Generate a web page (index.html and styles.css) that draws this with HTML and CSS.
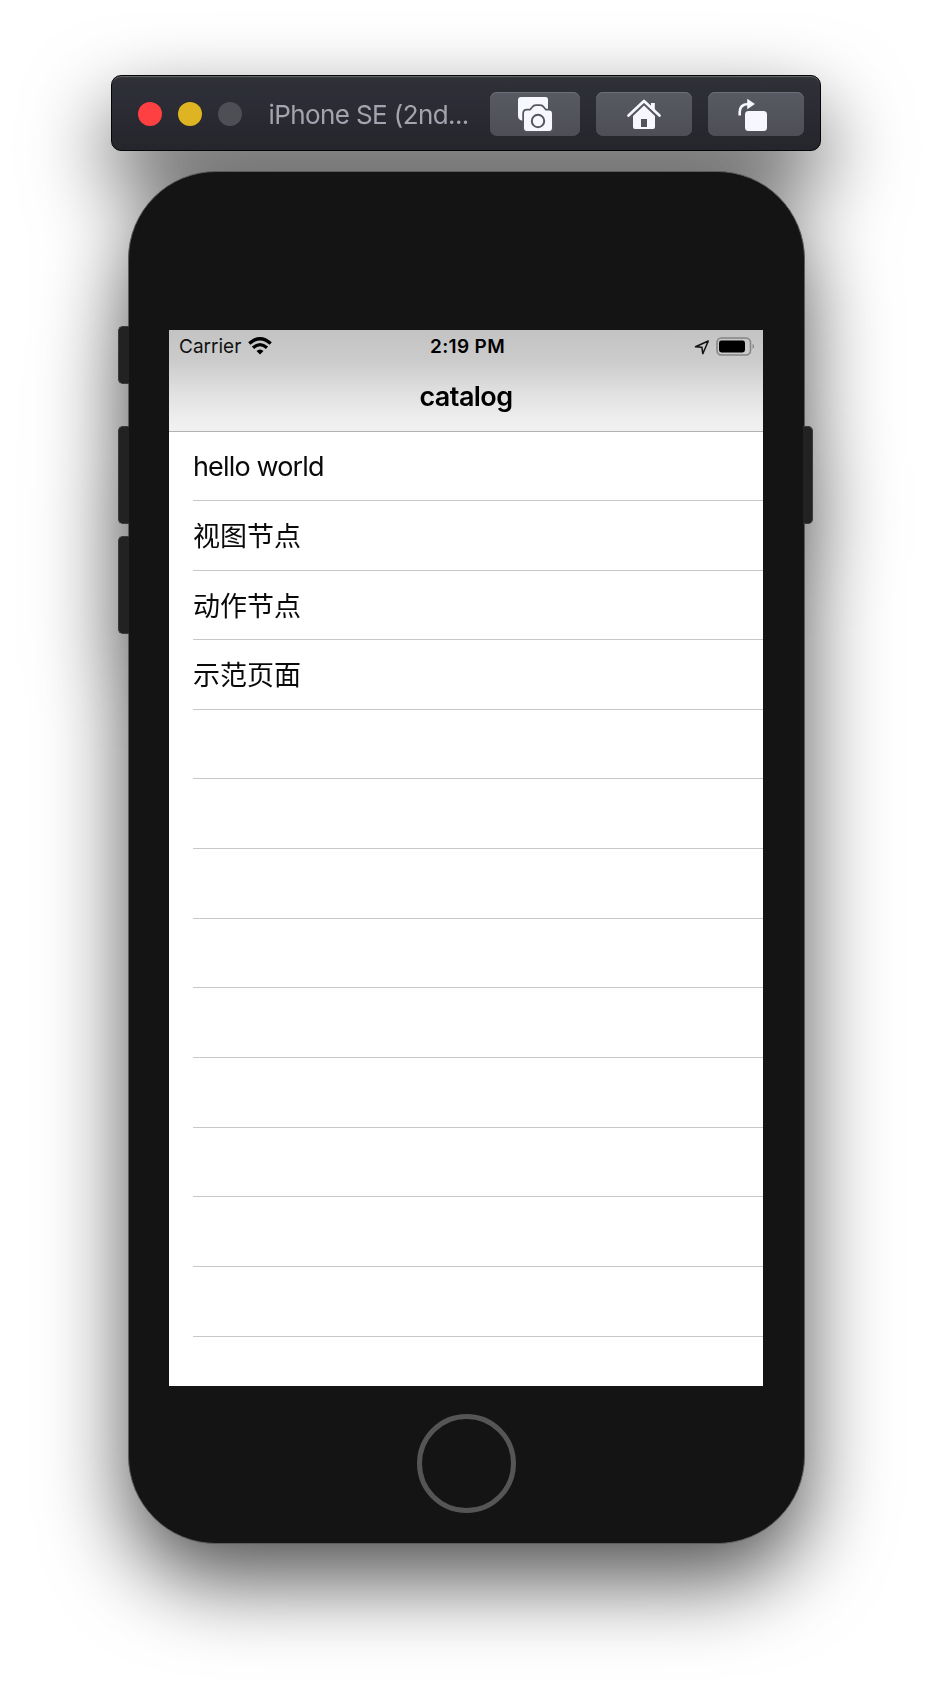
FILE: index.html
```html
<!DOCTYPE html>
<html lang="zh">
<head>
<meta charset="utf-8">
<title>catalog</title>
<link rel="stylesheet" href="styles.css">
</head>
<body>
<main class="simulator">
  <header class="titlebar">
    <div class="lights"><i class="light red"></i><i class="light yellow"></i><i class="light gray"></i></div>
    <div class="title">iPhone SE (2nd...</div>
    <div class="tools">
      <div class="tool camera">
        <svg width="90" height="44" viewBox="490 92 90 44">
          <path d="M521 97h24.500q2.500 0 2.500 2.500v14h-25v7.300q-5-.3-5-5.300v-15.500q0-3 3-3z" fill="#f6f7ff"/>
          <path d="M527 110.500h3.500l2.500-3q1-1.500 3-1.500h4q2 0 3 1.500l2.500 3h3.500q3 0 3 3v14.500q0 3-3 3h-22q-3 0-3-3v-14.500q0-3 3-3z" fill="#f6f7ff" stroke="#55565e" stroke-width="3.500" paint-order="stroke"/>
          <circle cx="538" cy="121" r="6.200" fill="none" stroke="#55565e" stroke-width="2"/>
        </svg>
      </div>
      <div class="tool">
        <svg width="96" height="44" viewBox="596 92 96 44">
          <path d="M628.500 115.500L644 101l15.500 14.500" fill="none" stroke="#f6f7ff" stroke-width="2.700" stroke-linecap="round" stroke-linejoin="round"/>
          <path d="M651 103h3.800v8l-3.800-3.500z" fill="#f6f7ff"/>
          <path d="M644 105.500L655 116v11q0 2-2 2h-18q-2 0-2-2v-11z" fill="#f6f7ff"/>
          <rect x="641" y="119" width="6" height="8" fill="#52535a"/>
        </svg>
      </div>
      <div class="tool">
        <svg width="96" height="44" viewBox="708 92 96 44">
          <rect x="745" y="111" width="22" height="20" rx="3.500" fill="#f6f7ff"/>
          <path d="M739.700 115.500v-3.500q0-7.500 8.300-8" fill="none" stroke="#f6f7ff" stroke-width="2.600"/>
          <path d="M747.500 99.300l7 4.700-7 4.700z" fill="#f6f7ff" stroke="#f6f7ff" stroke-width=".6" stroke-linejoin="round"/>
        </svg>
      </div>
    </div>
  </header>
  <section class="phone">
    <i class="key mute"></i><i class="key up"></i><i class="key down"></i><i class="key power"></i>
    <div class="screen">
      <div class="navbar">
        <div class="status">
          <div class="carrier"><span class="carrier-name">Carrier</span>
            <svg width="24" height="18" viewBox="0 0 24 18">
              <g fill="none" stroke="#000" stroke-width="3.300"><path d="M1.300 6.500q10.700-9.500 21.400 0"/><path d="M5 10.700q7-6.200 14 0"/></g>
              <path d="M8.500 14q3.500-3 7 0L12 17.400z"/>
            </svg>
          </div>
          <span class="time">2:19 PM</span>
          <div class="indicators">
            <svg width="62" height="20" viewBox="694 335 62 20">
              <path d="M695.500 345.700L708.300 340l-5.500 12.700-.900-6.400z" fill="none" stroke="#111" stroke-width="1.500" stroke-linejoin="round"/>
              <rect x="717" y="337" width="33.500" height="17" rx="4.500" fill="none" stroke="#858585" stroke-width="1.600"/>
              <rect x="719" y="339.500" width="26" height="12" rx="2.400"/>
              <path d="M752.600 342.500q2.600 2.800 0 5.600z" fill="#777"/>
            </svg>
          </div>
        </div>
        <h1 class="heading">catalog</h1>
      </div>
      <ul class="list">
        <li class="row latin">hello world</li>
        <li class="row">视图节点</li>
        <li class="row">动作节点</li>
        <li class="row">示范页面</li>
        <li class="row"></li><li class="row"></li><li class="row"></li>
        <li class="row"></li><li class="row"></li><li class="row"></li>
        <li class="row"></li><li class="row"></li><li class="row"></li>
      </ul>
    </div>
    <div class="home"></div>
  </section>
</main>
</body>
</html>
```

FILE: styles.css
```css
* { box-sizing: border-box; }
body {
  margin: 0;
  background: #fff;
  font-family: Inter, "Noto Sans CJK SC", sans-serif;
  overflow: hidden;
}
.simulator {
  width: 932px;
  height: 1694px;
  padding-top: 75px;
  display: flex;
  flex-direction: column;
  align-items: center;
  gap: 20px;
  filter: drop-shadow(0 36px 42px rgba(0, 0, 0, .68));
}
.titlebar {
  width: 710px;
  height: 76px;
  padding: 1px 16px 0 24px;
  display: flex;
  align-items: center;
  justify-content: space-between;
  background: linear-gradient(#303236, #2c2d36 30%, #25262b);
  border: 1px solid #050506;
  border-radius: 10px;
  box-shadow: inset 0 2px 1px -1px #6a6b6e;
}
.lights { display: flex; gap: 16px; padding-left: 2px; }
.light { width: 24px; height: 24px; border-radius: 50%; }
.red { background: #ff4042; }
.yellow { background: #dfb422; }
.gray { background: #4e4f54; }
.title {
  margin-left: 5px;
  padding-top: 2px;
  width: 200px;
  font-size: 26px;
  line-height: 32px;
  letter-spacing: -.6px;
  color: #a4a4b0;
  white-space: nowrap;
}
.tools { display: flex; gap: 16px; }
.tool {
  width: 96px;
  height: 44px;
  border-radius: 7px;
  background: linear-gradient(#585a63, #4e4f55);
  box-shadow: inset 0 1px #6d6e76;
}
.tool.camera { width: 90px; }
.tool svg { display: block; }
.phone {
  position: relative;
  width: 677px;
  height: 1373px;
  padding-top: 158px;
  border: 1px solid #5c5c5c;
  border-radius: 88px;
  background: #141414;
  display: flex;
  flex-direction: column;
  align-items: center;
}
.key {
  position: absolute;
  left: -11px;
  width: 11px;
  height: 98px;
  background: #222;
  border: 1px solid #3b3b3b;
  border-right: 0;
  border-radius: 5px 0 0 5px;
}
.mute { top: 154px; height: 58px; }
.up { top: 254px; }
.down { top: 364px; }
.power {
  top: 254px;
  left: auto;
  right: -9px;
  width: 10px;
  border-right: 1px solid #3b3b3b;
  border-left: 0;
  border-radius: 0 5px 5px 0;
}
.screen {
  width: 594px;
  height: 1056px;
  flex: none;
  background: #fff;
  overflow: hidden;
}
.navbar {
  height: 102px;
  background: linear-gradient(#c3c3c3, #cbcbcb 30%, #e3e2e3 65%, #efeeef 88%, #f1f1f1);
  border-bottom: 1px solid #b2b2b2;
}
.status {
  height: 32px;
  padding: 0 7px 0 10px;
  display: grid;
  grid-template-columns: 1fr auto 1fr;
  align-items: center;
  font-size: 19px;
  line-height: 32px;
}
.carrier { display: flex; align-items: center; gap: 7px; color: #111; }
.carrier-name { padding-top: 2px; line-height: 30px; }
.time { padding-top: 2px; line-height: 30px; font-weight: 600; letter-spacing: .35px; }
.indicators { display: flex; justify-content: flex-end; }
.indicators svg { display: block; margin-top: -1px; }
.heading {
  margin: 18px 0 0;
  font-size: 27px;
  line-height: 34px;
  font-weight: 600;
  letter-spacing: -.55px;
  text-align: center;
}
.list { margin: -.8px 0 0; padding: 0 0 0 24px; list-style: none; }
.row {
  height: 69.660px;
  padding-top: 1px;
  font-size: 27px;
  line-height: 69px;
  border-bottom: 1px solid #c8c8c8;
  color: #0a0a0a;
}
.row.latin { letter-spacing: -.85px; }
.home {
  flex: none;
  margin-top: 28px;
  width: 99px;
  height: 99px;
  border: 5px solid #555;
  border-radius: 50%;
}
```
